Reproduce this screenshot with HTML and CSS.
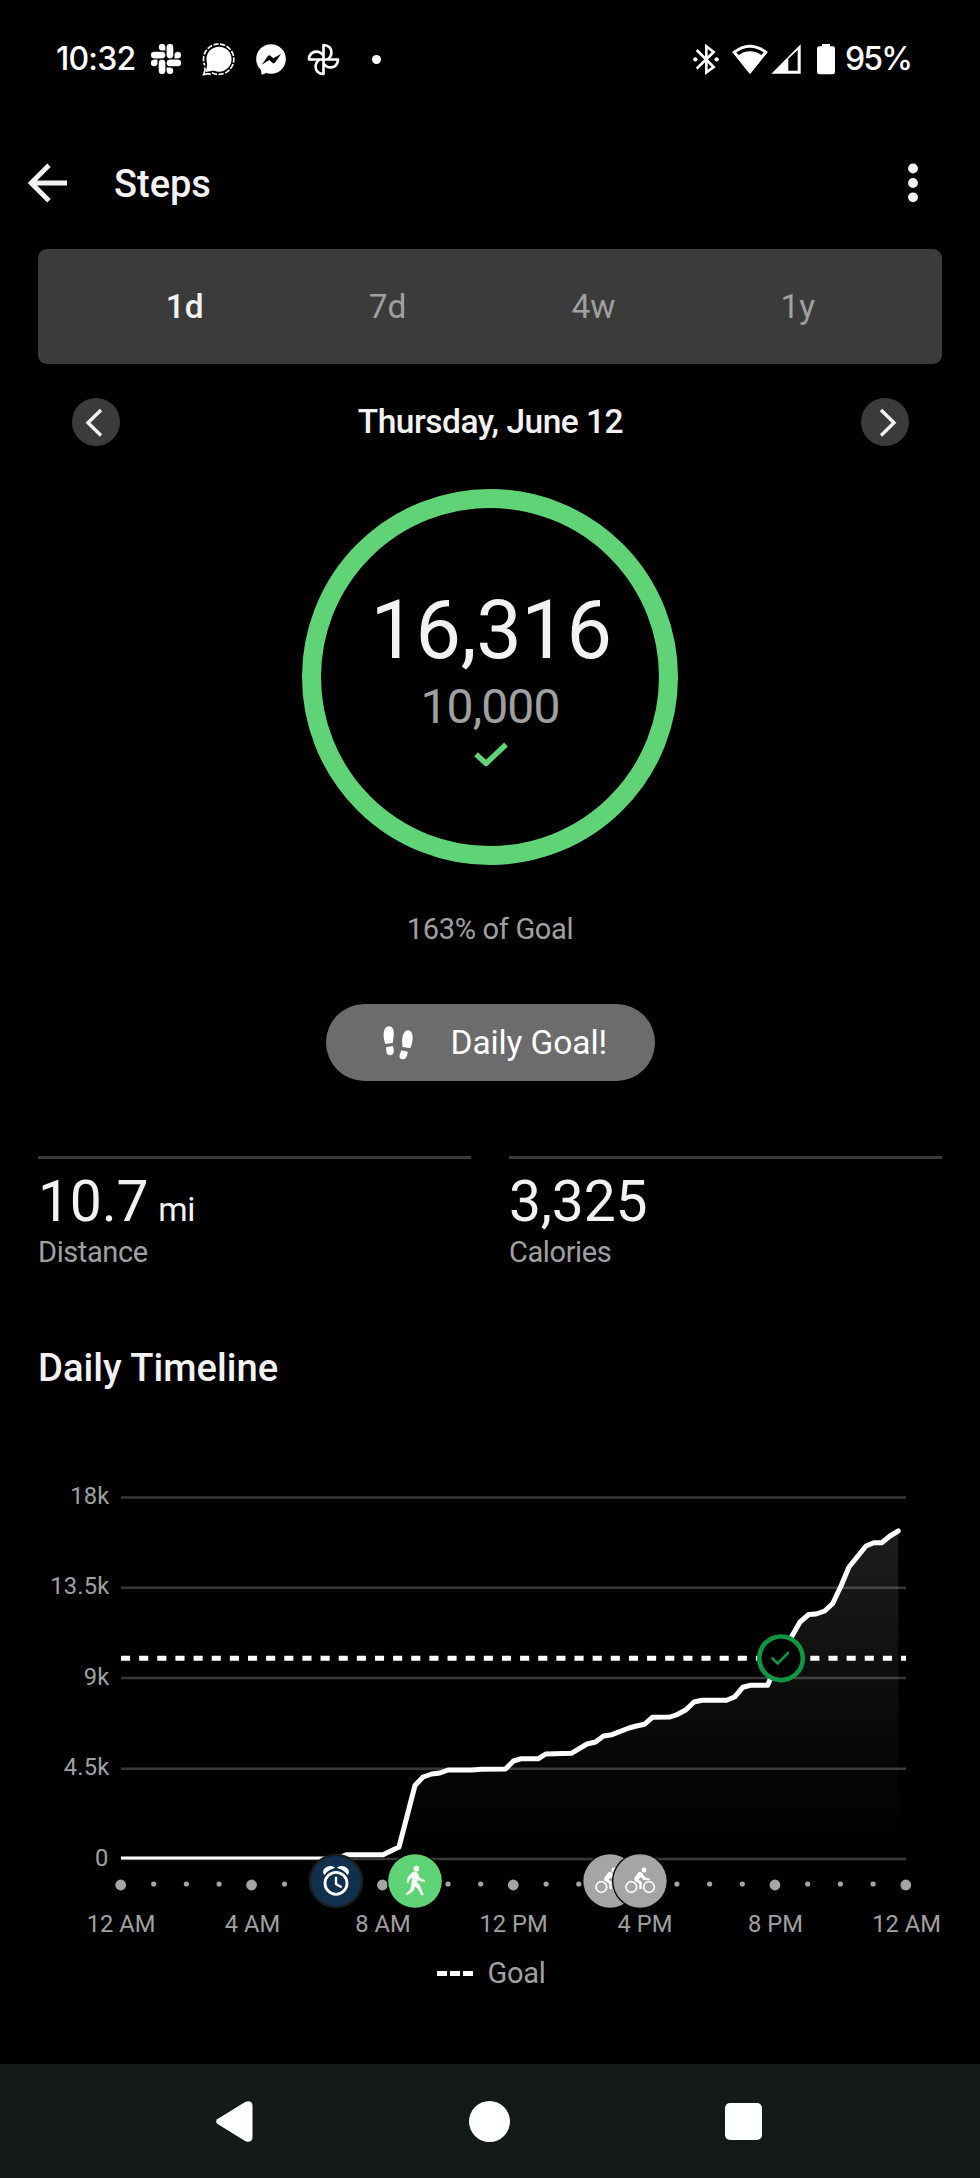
FILE: index.html
```html
<!DOCTYPE html>
<html lang="en">
<head>
<meta charset="utf-8">
<title>Steps</title>
<link rel="stylesheet" href="styles.css">
</head>
<body>
<div class="screen">
  <header class="status">
    <div class="status-left">
      <span class="clock">10:32</span>
      <svg width="30" height="30" viewBox="0 0 24 24" fill="#fff" stroke="#fff" stroke-width=".3"><path d="M5.042 15.165a2.528 2.528 0 0 1-2.52 2.523A2.528 2.528 0 0 1 0 15.165a2.527 2.527 0 0 1 2.522-2.52h2.52v2.52zM6.313 15.165a2.527 2.527 0 0 1 2.521-2.52 2.527 2.527 0 0 1 2.521 2.52v6.313A2.528 2.528 0 0 1 8.834 24a2.528 2.528 0 0 1-2.521-2.522v-6.313zM8.834 5.042a2.528 2.528 0 0 1-2.521-2.52A2.528 2.528 0 0 1 8.834 0a2.528 2.528 0 0 1 2.521 2.522v2.52H8.834zM8.834 6.313a2.528 2.528 0 0 1 2.521 2.521 2.528 2.528 0 0 1-2.521 2.521H2.522A2.528 2.528 0 0 1 0 8.834a2.528 2.528 0 0 1 2.522-2.521h6.312zM18.956 8.834a2.528 2.528 0 0 1 2.522-2.521A2.528 2.528 0 0 1 24 8.834a2.528 2.528 0 0 1-2.522 2.521h-2.522V8.834zM17.688 8.834a2.528 2.528 0 0 1-2.523 2.521 2.527 2.527 0 0 1-2.52-2.521V2.522A2.527 2.527 0 0 1 15.165 0a2.528 2.528 0 0 1 2.523 2.522v6.312zM15.165 18.956a2.528 2.528 0 0 1 2.523 2.522A2.528 2.528 0 0 1 15.165 24a2.527 2.527 0 0 1-2.52-2.522v-2.522h2.52zM15.165 17.688a2.527 2.527 0 0 1-2.52-2.523 2.526 2.526 0 0 1 2.52-2.52h6.313A2.527 2.527 0 0 1 24 15.165a2.528 2.528 0 0 1-2.522 2.523h-6.313z"/></svg>
      <svg width="33" height="33" viewBox="606 66 99 100" fill="none">
        <circle cx="657" cy="115" r="38" fill="#fff"/>
        <path d="M622 125L617 154L650 148Z" fill="#fff"/>
        <path d="M633 155A46 46 0 1 0 614 134" stroke="#fff" stroke-width="5" stroke-dasharray="16 4.500" stroke-dashoffset="-3"/>
        <path d="M613 140L615 147L610 162L624 159L632 161" stroke="#fff" stroke-width="5"/>
      </svg>
      <svg width="30" height="31" viewBox="768 71 90 93">
        <circle cx="813" cy="116" r="44.500" fill="#fff"/>
        <path d="M781 140L785 163L806 156Z" fill="#fff"/>
        <path d="M785 133L804 107Q808 103 812 107L820 114L843 101L825 127Q821 131 817 127L808 119Z" fill="#000"/>
      </svg>
      <svg width="33" height="33" viewBox="922 67 100 100" fill="none" stroke="#fff" stroke-width="8" stroke-linejoin="round">
        <path id="petal" d="M972 117V73C988 73 996 84 996 95C996 105 991 112 984 117"/>
        <use href="#petal" transform="rotate(90 972 117)"/>
        <use href="#petal" transform="rotate(180 972 117)"/>
        <use href="#petal" transform="rotate(270 972 117)"/>
      </svg>
      <i class="more-dot"></i>
    </div>
    <div class="status-right">
      <svg width="26" height="31" viewBox="97 69 78 93" fill="none" stroke="#fff" stroke-width="8">
        <path d="M108 87L159 138L137 154V76L159 93L108 143"/>
        <circle cx="104" cy="115" r="6.500" fill="#fff" stroke="none"/><circle cx="168" cy="115" r="6.500" fill="#fff" stroke="none"/>
      </svg>
      <svg class="wifi" width="36" height="31" viewBox="216 67 108 93">
        <path d="M270 157L217 91Q270 47 323 91Z" fill="#fff"/>
        <path d="M230 98Q270 69 310 98" stroke="#000" stroke-width="11" fill="none"/>
        <path d="M270 157L217 91L224 86L240 106Z" fill="#fff"/><path d="M270 157L323 91L316 86L300 106Z" fill="#fff"/>
      </svg>
      <svg class="cell" width="30" height="31" viewBox="332 69 90 93"><path d="M333 158L421 70V158Z" fill="#fff"/><path d="M384 113L412 87V149H384Z" fill="#000"/></svg>
      <svg class="battery" width="18" height="31" viewBox="473 67 54 93" fill="#fff"><rect x="473" y="74" width="54" height="84" rx="7"/><rect x="488" y="67" width="24" height="10"/></svg>
      <span class="percent">95%</span>
    </div>
  </header>

  <div class="appbar">
    <svg width="40" height="40" viewBox="0 0 40 40" fill="none" stroke="#f2f2f2" stroke-width="4.800"><path d="M21 2.300L3.200 20L21 37.700M3.200 20H39"/></svg>
    <h1 class="title">Steps</h1>
    <svg class="menu" width="10" height="40" viewBox="0 0 10 40" fill="#f2f2f2"><circle cx="5" cy="5.500" r="4.900"/><circle cx="5" cy="20" r="4.900"/><circle cx="5" cy="34.300" r="4.900"/></svg>
  </div>

  <nav class="tabs">
    <span class="tab tab-active">1d</span><span class="tab">7d</span><span class="tab">4w</span><span class="tab">1y</span>
  </nav>

  <div class="date-row">
    <span class="round"><svg width="48" height="48" viewBox="0 0 48 48" fill="none" stroke="#f2f2f2" stroke-width="3.400"><path d="M29 12L16 24.800L29 37.500"/></svg></span>
    <span class="date">Thursday, June 12</span>
    <span class="round"><svg width="48" height="48" viewBox="0 0 48 48" fill="none" stroke="#f2f2f2" stroke-width="3.400"><path d="M20 12L33 24.800L20 37.500"/></svg></span>
  </div>

  <section class="ring">
    <span class="steps">16,316</span>
    <span class="target">10,000</span>
    <svg width="34" height="26" viewBox="0 0 34 26" fill="none" stroke="#61d377" stroke-width="5.400" stroke-linejoin="round"><path d="M2 12.300L12 21.500L32 2.500"/></svg>
  </section>
  <p class="of-goal">163% of Goal</p>
  <div class="pill">
    <svg width="30" height="34" viewBox="250 137 90 102" fill="#fff">
      <path d="M257 191C248 168 250 139 268 138C285 138 284 160 279 188Z"/>
      <path d="M259 201L279 197C283 204 284 217 279 222C274 226 265 226 261 219Z"/>
      <path d="M309 200C304 174 311 150 325 150C341 151 343 176 332 204Z"/>
      <path d="M306 210L324 214C323 226 320 237 309 237C298 237 296 227 306 210Z"/>
    </svg>
    <span>Daily Goal!</span>
  </div>

  <section class="stats">
    <div class="stat"><div class="value">10.7<span class="unit">mi</span></div><div class="label">Distance</div></div>
    <div class="stat"><div class="value">3,325</div><div class="label">Calories</div></div>
  </section>

  <h2 class="heading">Daily Timeline</h2>
  <svg class="chart" width="980" height="500" viewBox="0 1450 980 500">
    <defs>
      <linearGradient id="fade" gradientUnits="userSpaceOnUse" x1="0" y1="1531" x2="0" y2="1859"><stop offset="0" stop-color="#fff" stop-opacity=".115"/><stop offset=".3" stop-color="#fff" stop-opacity=".075"/><stop offset=".7" stop-color="#fff" stop-opacity=".025"/><stop offset="1" stop-color="#fff" stop-opacity="0"/></linearGradient>
      <g id="rider">
        <circle cx="1020" cy="153" r="84" fill="#000"/><circle cx="1020" cy="153" r="80" fill="#a5a5a5"/>
        <g fill="none" stroke="#fff" stroke-width="5"><circle cx="994" cy="171" r="16"/><circle cx="1047" cy="171" r="16"/></g>
        <circle cx="1032" cy="120" r="7.500" fill="#fff"/>
        <path d="M1016 126Q1023 124 1027 130L1035 142L1050 146V151L1031 150L1023 142L1015 149L1025 155V177H1018V161L1004 152Q1000 148 1004 142Z" fill="#fff"/>
      </g>
    </defs>
    <g class="axis-text axis-y">
      <text x="109.500" y="1503.500">18k</text><text x="109.500" y="1594">13.5k</text><text x="109.500" y="1684.500">9k</text><text x="109.500" y="1774.500">4.5k</text><text x="108.500" y="1865.500">0</text>
    </g>
    <path d="M121 1858L338 1858L347 1854.700L383 1854.700L399 1847L415 1785.500L423 1777L431.700 1774L440 1773L448 1770L472 1770L481 1769.300L505.500 1769L513.500 1761L521.500 1758.700L538.500 1758.700L545.700 1754L571.300 1753.300L587 1744L595.500 1742L603.500 1736L612 1734.700L629 1728L636.500 1726L644.500 1724.300L652.300 1717.300L670 1717L677.700 1714.300L686 1709.700L694 1702L702 1700.300L726.700 1700.300L735 1696.700L742.700 1687.300L750.700 1685.300L767.700 1685.300L776 1664L792 1636L800 1622L808.700 1614.500L816 1614L824.700 1611L832.700 1603.500L841 1586L849 1567L866 1546L873.700 1542.700L881.700 1542.700L890 1536L898.300 1531V1859H121Z" fill="url(#fade)"/>
    <path d="M121 1497.400H906M121 1587.700H906M121 1678.100H906M121 1768.700H906M121 1859H906" stroke="#fff" stroke-opacity=".22" stroke-width="2.500"/>
    <path d="M121 1658.200H906" stroke="#fff" stroke-width="5" stroke-dasharray="9.100 9.040"/>
    <path d="M121 1858H338" fill="none" stroke="#fff" stroke-width="3"/>
    <path d="M338 1858L347 1854.700L383 1854.700L399 1847L415 1785.500L423 1777L431.700 1774L440 1773L448 1770L472 1770L481 1769.300L505.500 1769L513.500 1761L521.500 1758.700L538.500 1758.700L545.700 1754L571.300 1753.300L587 1744L595.500 1742L603.500 1736L612 1734.700L629 1728L636.500 1726L644.500 1724.300L652.300 1717.300L670 1717L677.700 1714.300L686 1709.700L694 1702L702 1700.300L726.700 1700.300L735 1696.700L742.700 1687.300L750.700 1685.300L767.700 1685.300L776 1664L792 1636L800 1622L808.700 1614.500L816 1614L824.700 1611L832.700 1603.500L841 1586L849 1567L866 1546L873.700 1542.700L881.700 1542.700L890 1536L898.300 1531" fill="none" stroke="#fff" stroke-width="5" stroke-linejoin="round" stroke-linecap="round"/>
    <circle cx="781" cy="1658.300" r="21.800" fill="#000" stroke="#0e9642" stroke-width="4.600"/>
    <path d="M772.500 1658.500L777.700 1663.500L788 1653" fill="none" stroke="#0e9642" stroke-width="2.600" stroke-linecap="round"/>
    <path d="M153.700 1884H906" stroke="#a5a5a5" stroke-width="5.200" stroke-linecap="round" stroke-dasharray="0 32.700"/>
    <path d="M120.700 1885H907" stroke="#a5a5a5" stroke-width="10.800" stroke-linecap="round" stroke-dasharray="0 130.850"/>
    <g transform="translate(300 1830) scale(.33333)">
      <circle cx="108" cy="153" r="82" fill="#1c1c1c"/><circle cx="108" cy="153" r="75" fill="#11304d"/>
      <circle cx="108" cy="160" r="33" fill="none" stroke="#fff" stroke-width="8.500"/>
      <path d="M108 140V162L125 172" fill="none" stroke="#fff" stroke-width="7"/>
      <path d="M73 132C66 119 84 104 102 113Q84 118 73 132ZM143 132C150 119 132 104 114 113Q132 118 143 132Z" fill="#fff" stroke="#fff" stroke-width="4" stroke-linejoin="round"/>
      <circle cx="345" cy="153" r="84" fill="#000"/><circle cx="345" cy="153" r="80.500" fill="#61d377"/>
      <circle cx="349" cy="116" r="8.500" fill="#fff"/>
      <path d="M338 127Q345 124 351 128Q356 132 358 144L373 151L374 155L357 152L354 146L351 157Q360 165 363 176L370 195H365L355 177L345 168Q343 181 334 187L319 195L318 192L331 180L335 162L338 141L329 147L325 158H321Q322 146 326 139Z" fill="#fff" stroke="#fff" stroke-width="1.500"/>
      <use href="#rider" x="-90"/><use href="#rider"/>
    </g>
    <g class="axis-text axis-x">
      <text x="121" y="1931.500">12 AM</text><text x="252.500" y="1931.500">4 AM</text><text x="383" y="1931.500">8 AM</text><text x="513.500" y="1931.500">12 PM</text><text x="645" y="1931.500">4 PM</text><text x="775.500" y="1931.500">8 PM</text><text x="906.500" y="1931.500">12 AM</text>
    </g>
  </svg>
  <div class="legend"><i class="dash"></i><i class="dash"></i><i class="dash"></i><span class="legend-text">Goal</span></div>

  <footer class="navbar">
    <svg width="37" height="41" viewBox="0 0 37 41" fill="#fff"><path d="M1.200 18.300L29.500 .8Q33 -.8 35.500 1.500Q36.500 2.500 36.500 5V36Q36.500 38.500 35.500 39.500Q33 41.800 29.500 40.200L1.200 22.700Q-.8 20.500 1.200 18.300Z"/></svg>
    <i class="home"></i>
    <i class="recents"></i>
  </footer>
</div>
</body>
</html>
```
FILE: styles.css
```css
* { box-sizing: border-box; }
body { margin: 0; background: #000; }
svg { display: block; flex: none; }
.screen {
  width: 980px; height: 2178px; display: flex; flex-direction: column; overflow: hidden;
  background: #000; color: #f2f2f2; font-family: Roboto, "Liberation Sans", sans-serif;
}
.status { display: flex; justify-content: space-between; height: 118px; padding: 0 69px 0 56px; color: #fff; }
.status-left, .status-right { display: flex; align-items: center; height: 118px; }
.status-left { gap: 21px; }
.clock, .percent { font: 500 32px/38px Inter, sans-serif; letter-spacing: -.8px; }
.clock { width: 74px; white-space: nowrap; }
.more-dot { width: 9px; height: 9px; margin-left: 11px; border-radius: 50%; background: #fff; }
.wifi { margin-left: 13px; }
.cell { margin-left: 3px; }
.battery { margin-left: 16px; }
.percent { width: 66px; margin-left: 10px; white-space: nowrap; letter-spacing: -1.8px; }

.appbar { display: flex; align-items: center; height: 130px; padding: 0 62px 0 28px; }
.title { flex: 1; margin: 1px 0 0 46px; font-size: 38px; line-height: 44px; font-weight: 500; }

.tabs { display: flex; justify-content: center; align-items: center; gap: 165px; height: 115px; margin: 1px 38px 0; padding-left: 1px; border-radius: 9px; background: #3b3b3b; }
.tab { color: #a0a0a0; font-size: 33.500px; line-height: 40px; }
.tab-active { color: #f2f2f2; font-weight: 500; }

.date-row { display: flex; justify-content: space-between; align-items: center; height: 48px; margin: 34px 71px 0 72px; }
.round { width: 48px; height: 48px; border-radius: 50%; background: #3b3b3b; }
.date { padding-bottom: 1px; font-size: 33.500px; line-height: 40px; font-weight: 500; letter-spacing: -.5px; }

.ring { display: flex; flex-direction: column; align-items: center; align-self: center; width: 376px; height: 376px; margin-top: 43px; padding-top: 75px; border: 19px solid #61d377; border-radius: 50%; }
.steps { padding-left: 2px; font-size: 81px; line-height: 96px; letter-spacing: -.4px; }
.target { color: #a0a0a0; font-size: 48px; line-height: 56px; letter-spacing: -.9px; }
.ring svg { margin: 7px 0 0 2px; }
.of-goal { margin: 47px 0 0; color: #a0a0a0; font-size: 29px; line-height: 34px; letter-spacing: -.3px; text-align: center; }
.pill { display: flex; align-items: center; align-self: center; gap: 38px; width: 329px; height: 77px; margin-top: 58px; padding-left: 57px; border-radius: 39px; background: #6c6c6c; color: #fff; font-size: 33.500px; line-height: 40px; letter-spacing: -.1px; }

.stats { display: grid; grid-template-columns: 1fr 1fr; gap: 38px; margin: 75px 38px 0; }
.stat { padding-top: 10px; border-top: 3px solid #3b3b3b; }
.value { height: 66px; font-size: 57px; line-height: 66px; letter-spacing: -.2px; }
.unit { margin-left: 10px; font-size: 33.500px; letter-spacing: -.5px; }
.label { color: #a0a0a0; font-size: 29px; line-height: 34px; letter-spacing: -.4px; }

.heading { margin: 77px 38px 0; font-size: 38.200px; line-height: 44px; font-weight: 500; }
.chart { margin-top: 60px; }
.axis-text { fill: #a0a0a0; font-size: 23.700px; }
.axis-y { text-anchor: end; letter-spacing: .2px; }
.axis-x { text-anchor: middle; }
.legend { display: flex; justify-content: center; align-items: center; gap: 3px; height: 34px; margin-top: 6px; padding-left: 2px; }
.dash { width: 10px; height: 5px; background: #fff; }
.legend-text { margin-left: 12px; color: #a0a0a0; font-size: 29px; line-height: 34px; letter-spacing: -.3px; }

.navbar { display: flex; justify-content: space-between; align-items: center; height: 114px; margin-top: auto; padding: 0 218px 0 216px; background: #141919; }
.home { width: 41px; height: 41px; border-radius: 50%; background: #fff; }
.recents { width: 37px; height: 37px; border-radius: 5px; background: #fff; }
```
